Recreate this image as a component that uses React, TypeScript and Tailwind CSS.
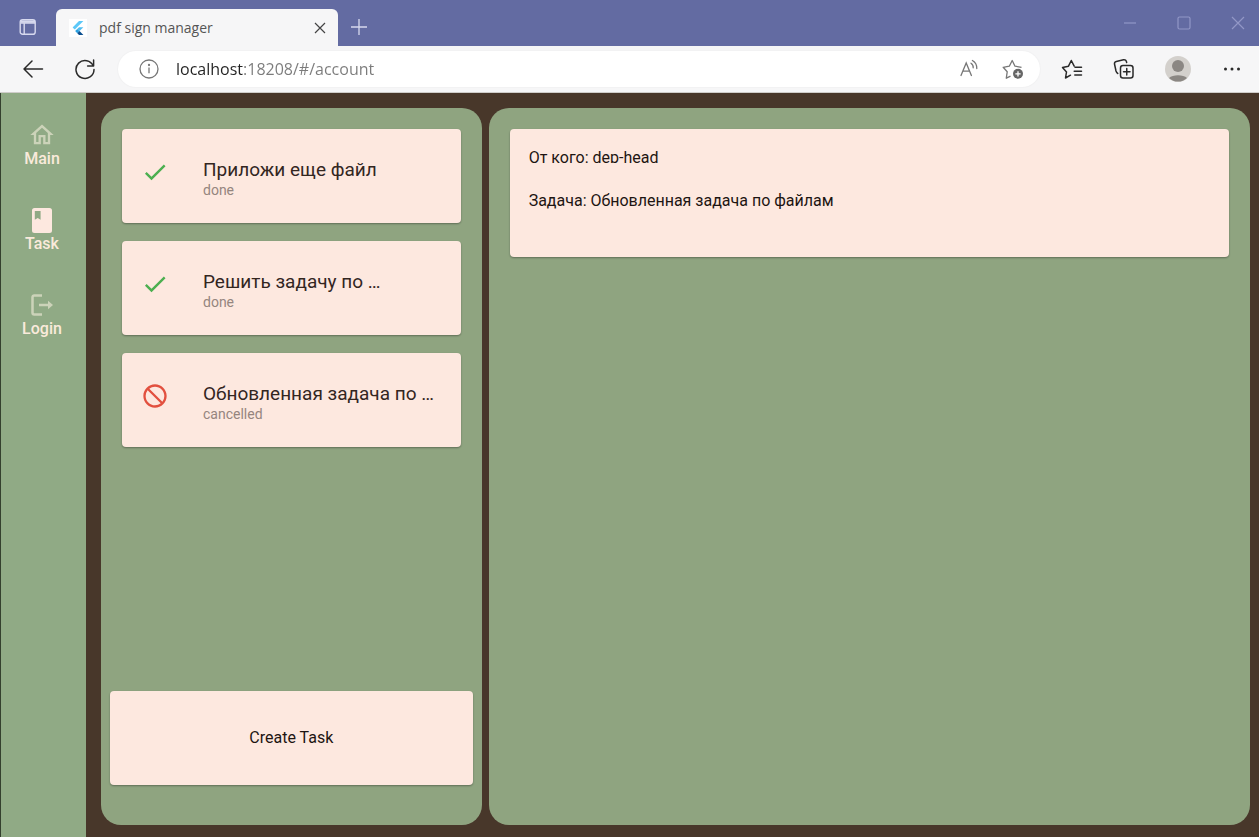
import type { ReactNode } from "react";
import { MdBlock, MdCheck, MdOutlineHome } from "react-icons/md";

type Task = { title: string; status: "done" | "cancelled" };

const tasks: Task[] = [
  { title: "Приложи еще файл", status: "done" },
  { title: "Решить задачу по …", status: "done" },
  { title: "Обновленная задача по …", status: "cancelled" },
];

function FlutterLogo() {
  return (
    <svg className="h-[18px] w-[18px] bg-white" viewBox="0 0 18 18" aria-hidden="true">
      <path d="M10 2h4.4L5.8 10.6 3.6 8.4z" fill="#5cc8f8" />
      <path d="M10 8.2h4.4l-3.9 3.9-2.3-2.2z" fill="#4fbdf0" />
      <path d="M6.1 12.1l2.2-2.2 2.2 2.2-2.2 2.2z" fill="#2aa0e0" />
      <path d="M8.3 14.3l2.2-2.2 3.9 3.9H10z" fill="#0b4f8f" />
    </svg>
  );
}

function TabStrip() {
  return (
    <header className="flex h-[46px] shrink-0 items-end bg-[#636ba2] text-[#d7d9ee]">
      <button aria-label="Tab actions" className="flex h-[38px] w-[56px] items-center justify-center">
        <svg width="18" height="18" viewBox="0 0 18 18" fill="none" stroke="currentColor" strokeWidth="1.4">
          <rect x="1.2" y="1.7" width="15" height="14.6" rx="2.4" />
          <path d="M1.5 5h14.5M5.2 5v11" />
          <path d="M2 3.6h14" strokeWidth="2.4" />
        </svg>
      </button>
      <div className="flex h-[37px] w-[282px] items-center rounded-t-md bg-[#f6f6f7] pr-2 pl-[13px] text-[#555]">
        <FlutterLogo />
        <span className="ml-3 flex-1 font-['Open_Sans',sans-serif] text-sm">pdf sign manager</span>
        <button aria-label="Close tab" className="flex h-5 w-5 items-center justify-center">
          <svg width="12" height="12" viewBox="0 0 12 12" stroke="#444" strokeWidth="1.2">
            <path d="M1 1l10 10M11 1L1 11" />
          </svg>
        </button>
      </div>
      <button aria-label="New tab" className="flex h-[38px] w-[42px] items-center justify-center">
        <svg width="18" height="18" viewBox="0 0 18 18" stroke="currentColor" strokeWidth="1.3">
          <path d="M9 1v16M1 9h16" />
        </svg>
      </button>
      <div className="ml-auto flex h-full text-[#9297c6]">
        <button aria-label="Minimize" className="flex w-[54px] items-center justify-center">
          <svg width="14" height="14" viewBox="0 0 14 14" stroke="currentColor" strokeWidth="1.2">
            <path d="M1 7h12" />
          </svg>
        </button>
        <button aria-label="Maximize" className="flex w-[54px] items-center justify-center">
          <svg width="14" height="14" viewBox="0 0 14 14" fill="none" stroke="currentColor" strokeWidth="1.2">
            <rect x="1" y="1" width="12" height="12" rx="1.5" />
          </svg>
        </button>
        <button aria-label="Close" className="flex w-12 items-center justify-end pr-[14px]">
          <svg width="14" height="14" viewBox="0 0 14 14" stroke="currentColor" strokeWidth="1.2">
            <path d="M1 1l12 12M13 1L1 13" />
          </svg>
        </button>
      </div>
    </header>
  );
}

function Toolbar() {
  return (
    <div className="flex h-[47px] shrink-0 items-center border-b border-[#cfcdca] bg-[#f6f6f7] text-[#2a2a2a]">
      <button aria-label="Back" className="ml-[21px] flex h-6 w-6 items-center justify-center">
        <svg width="22" height="22" viewBox="0 0 22 22" fill="none" stroke="currentColor" strokeWidth="1.5" strokeLinecap="round" strokeLinejoin="round">
          <path d="M20.5 11H2M10 3L2 11l8 8" />
        </svg>
      </button>
      <button aria-label="Refresh" className="ml-7 flex h-6 w-6 items-center justify-center">
        <svg width="22" height="22" viewBox="0 0 22 22" fill="none" stroke="currentColor" strokeWidth="1.5" strokeLinecap="round" strokeLinejoin="round">
          <path d="M19.3 8A9 9 0 1 0 20 11.5M19.6 2v6h-6" />
        </svg>
      </button>
      <div className="ml-[21px] flex h-[36px] flex-1 items-center rounded-full bg-white pr-[15px] pl-5 shadow-[0_0_2px_#0001]">
        <button aria-label="Site information" className="flex h-[22px] w-[22px] items-center justify-center text-[#777]">
          <svg width="20" height="20" viewBox="0 0 20 20" fill="none" stroke="currentColor" strokeWidth="1.3">
            <circle cx="10" cy="10" r="9" />
            <path d="M10 8.6v5.6" />
            <circle cx="10" cy="6" r="0.5" fill="currentColor" />
          </svg>
        </button>
        <input
          aria-label="Address"
          defaultValue="localhost:18208/#/account"
          className="ml-4 min-w-0 flex-1 bg-linear-[90deg,#222_68px,#7b7b7b_68px] bg-clip-text font-['Open_Sans',sans-serif] text-base text-transparent outline-none"
        />
        <button aria-label="Read aloud" className="flex h-6 w-6 items-center justify-center text-[#777]">
          <svg width="20" height="20" viewBox="0 0 20 20" fill="none" stroke="currentColor" strokeWidth="1.3" strokeLinecap="round">
            <path d="M2 16.500L7.200 4 12.400 16.500M3.900 12.200h6.600" />
            <path d="M12 4.200a5 5 0 0 1 2.200 4.600M13.400 1.500a9 9 0 0 1 4.400 8" />
          </svg>
        </button>
        <button aria-label="Add to favorites" className="ml-5 flex h-6 w-6 items-center justify-center text-[#777]">
          <svg width="22" height="22" viewBox="0 0 22 22" fill="none" stroke="currentColor" strokeWidth="1.3" strokeLinejoin="round">
            <path d="M8.500 18.200L4.300 20.200 5.200 13.800 1.200 9.300 7.300 8.200 10.200 2.500 13 8.200 19.500 9.300" />
            <circle cx="16" cy="15.800" r="5" fill="#666" stroke="none" />
            <path d="M16 13.200v5.200M13.400 15.800h5.200" stroke="#fff" />
          </svg>
        </button>
      </div>
      <button aria-label="Favorites" className="ml-5 flex h-6 w-6 items-center justify-center">
        <svg width="22" height="22" viewBox="0 0 22 22" fill="none" stroke="currentColor" strokeWidth="1.5" strokeLinecap="round" strokeLinejoin="round">
          <path d="M9.500 17.200L4.500 20 5.500 14 1.500 9.500 7.500 8.200 10.300 2.500 13.200 8.200" />
          <path d="M14 9.300h6.500M13.200 13.200h7.300M13.800 17.100h6.700" />
        </svg>
      </button>
      <button aria-label="Collections" className="ml-7 flex h-6 w-6 items-center justify-center">
        <svg width="22" height="22" viewBox="0 0 22 22" fill="none" stroke="currentColor" strokeWidth="1.5" strokeLinecap="round" strokeLinejoin="round">
          <rect x="7.500" y="7.500" width="12.500" height="12.500" rx="2.500" />
          <path d="M13.750 10.500v6.500M10.500 13.750h6.500" />
          <path d="M4.800 15.500C3.800 15 3.300 14 3 13L1.500 6C1.300 4.700 2 3.700 3.300 3.400L10.500 1.700C12 1.400 13.300 2.200 13.700 4.500" />
        </svg>
      </button>
      <button aria-label="Profile" className="ml-7 flex h-7 w-7 items-center justify-center">
        <svg width="26" height="26" viewBox="0 0 26 26">
          <circle cx="13" cy="13" r="13" fill="#d3d0cc" />
          <circle cx="13" cy="10" r="6" fill="#8b8783" />
          <path d="M4 22a10.500 5.500 0 0 1 18 0 13 13 0 0 1-18 0z" fill="#8b8783" />
        </svg>
      </button>
      <button aria-label="Settings and more" className="mr-[15px] ml-7 flex h-6 w-6 items-center justify-center">
        <svg width="18" height="18" viewBox="0 0 18 18" fill="currentColor">
          <circle cx="2.500" cy="9" r="1.500" />
          <circle cx="9" cy="9" r="1.500" />
          <circle cx="15.500" cy="9" r="1.500" />
        </svg>
      </button>
    </div>
  );
}

function NavItem({ href, label, children }: { href: string; label: string; children: ReactNode }) {
  return (
    <a href={href} className="flex flex-col items-center text-base leading-5 font-medium text-[#faeadb]">
      <span className="flex h-7 items-center">{children}</span>
      {label}
    </a>
  );
}

function Sidebar() {
  return (
    <nav className="flex w-[86px] shrink-0 flex-col gap-[37px] border-l border-[#34402e] bg-[#90aa85] pt-7 pr-[3px]">
      <NavItem href="#/account" label="Main">
        <MdOutlineHome size={28} className="text-[#ccd3b9]" />
      </NavItem>
      <NavItem href="#/task" label="Task">
        <svg width="20" height="25" viewBox="0 0 20 25" aria-hidden="true">
          <path
            fillRule="evenodd"
            fill="#fde8df"
            d="M2.500 0h15A2.500 2.500 0 0 1 20 2.500v20a2.500 2.500 0 0 1-2.500 2.500h-15A2.500 2.500 0 0 1 0 22.500v-20A2.500 2.500 0 0 1 2.500 0zM2.800 3v8.800l2.900-1.900 2.900 1.900V3z"
          />
        </svg>
      </NavItem>
      <NavItem href="#/login" label="Login">
        <svg width="22" height="22" viewBox="0 0 22 22" fill="none" stroke="#ccd3b9" strokeWidth="2.500" aria-hidden="true">
          <path d="M11 1.500H3.200A1.700 1.700 0 0 0 1.500 3.200v15.600a1.700 1.700 0 0 0 1.700 1.700H11" />
          <path d="M8 11h11" />
          <path d="M17 6.800L22 11l-5 4.200z" fill="#ccd3b9" stroke="none" />
        </svg>
      </NavItem>
    </nav>
  );
}

function TaskCard({ title, status }: Task) {
  return (
    <li>
      <button className="flex h-[94px] w-full items-center rounded bg-[#fde8df] pl-[19px] text-left shadow-[0_1px_2px_#0005]">
        {status === "done" ? (
          <MdCheck size={28} className="mb-2 shrink-0 text-[#4caf50]" />
        ) : (
          <MdBlock size={28} className="mb-2 shrink-0 -scale-x-100 text-[#e2503f]" />
        )}
        <span className="ml-[34px] flex min-w-0 flex-col pt-1">
          <span className="truncate text-[19px] leading-6 text-[#33261f]">{title}</span>
          <span className="text-sm leading-4 text-[#95857e]">{status}</span>
        </span>
      </button>
    </li>
  );
}

export default function App() {
  return (
    <div className="flex h-screen flex-col font-[Roboto,sans-serif]">
      <TabStrip />
      <Toolbar />
      <div className="flex min-h-0 flex-1 bg-[#48372a]">
        <Sidebar />
        <main className="grid min-w-0 flex-1 grid-cols-[1fr_2fr] gap-[7px] pt-[15px] pr-[9px] pb-3 pl-[15px]">
          <section aria-label="Tasks" className="flex min-w-0 flex-col justify-between rounded-[20px] bg-[#8fa480] pt-[21px] pb-10">
            <ul className="flex flex-col gap-[18px] px-[21px]">
              {tasks.map((task) => (
                <TaskCard key={task.title} {...task} />
              ))}
            </ul>
            <button className="mx-[9px] h-[94px] rounded bg-[#fde8df] text-base text-[#1d1512] shadow-[0_1px_2px_#0005]">
              Create Task
            </button>
          </section>
          <section aria-label="Task details" className="min-w-0 rounded-[20px] bg-[#8fa480] p-[21px]">
            <article className="flex h-32 flex-col gap-7 rounded bg-[#fde8df] px-[19px] pt-[19px] text-base leading-5 text-[#1d1512] shadow-[0_1px_2px_#0005]">
              <p className="h-[15px] overflow-hidden">От кого: dep-head</p>
              <p>Задача: Обновленная задача по файлам</p>
            </article>
          </section>
        </main>
      </div>
    </div>
  );
}
